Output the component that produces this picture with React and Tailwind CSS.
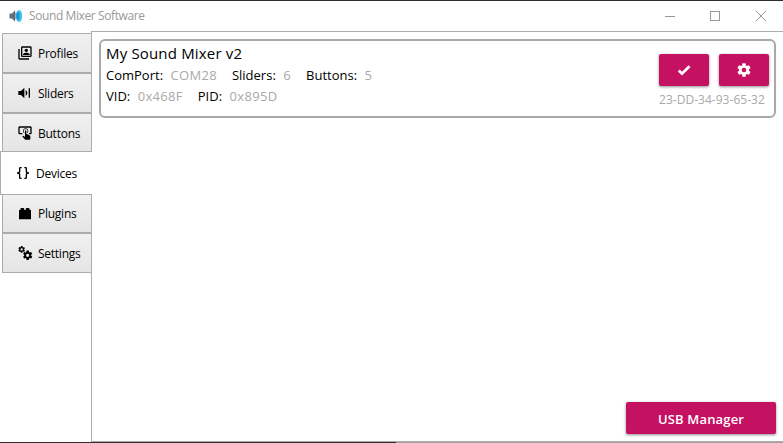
import React from "react";

const COG =
  "M12,15.5A3.5,3.5 0 0,1 8.5,12A3.5,3.5 0 0,1 12,8.5A3.5,3.5 0 0,1 15.5,12A3.5,3.5 0 0,1 12,15.5M19.43,12.97C19.47,12.65 19.5,12.33 19.5,12C19.5,11.67 19.47,11.34 19.43,11L21.54,9.37C21.73,9.22 21.78,8.95 21.66,8.73L19.66,5.27C19.54,5.05 19.27,4.96 19.05,5.05L16.56,6.05C16.04,5.66 15.5,5.32 14.87,5.07L14.5,2.42C14.46,2.18 14.25,2 14,2H10C9.75,2 9.54,2.18 9.5,2.42L9.13,5.07C8.5,5.32 7.96,5.66 7.44,6.05L4.95,5.05C4.73,4.96 4.46,5.05 4.34,5.27L2.34,8.73C2.21,8.95 2.27,9.22 2.46,9.37L4.57,11C4.53,11.34 4.5,11.67 4.5,12C4.5,12.33 4.53,12.65 4.57,12.97L2.46,14.63C2.27,14.78 2.21,15.05 2.34,15.27L4.34,18.73C4.46,18.95 4.73,19.03 4.95,18.95L7.44,17.94C7.96,18.34 8.5,18.68 9.13,18.93L9.5,21.58C9.54,21.82 9.75,22 10,22H14C14.25,22 14.46,21.82 14.5,21.58L14.87,18.93C15.5,18.67 16.04,18.34 16.56,17.94L19.05,18.95C19.27,19.03 19.54,18.95 19.66,18.73L21.66,15.27C21.78,15.05 21.73,14.78 21.54,14.63L19.43,12.97Z";

function Icon({ children, className = "size-4" }) {
  return (
    <svg viewBox="0 0 24 24" fill="currentColor" className={`shrink-0 ${className}`}>
      {children}
    </svg>
  );
}

const ProfilesIcon = (
  <Icon>
    <path fillRule="evenodd" d="M8 2H20A2 2 0 0 1 22 4V16A2 2 0 0 1 20 18H8A2 2 0 0 1 6 16V4A2 2 0 0 1 8 2M8 4V16H20V4ZM2 6H4V20H18V22H4A2 2 0 0 1 2 20Z" />
    <circle cx="14" cy="8" r="2.5" />
    <path d="M9 15V14C9 12.3 12 11.5 14 11.5S19 12.3 19 14V15Z" />
  </Icon>
);

const SlidersIcon = (
  <Icon>
    <path d="M2 9V15H6L11 20V4L6 9ZM13 8V16C14.6 15.3 15.5 13.8 15.5 12S14.6 8.7 13 8ZM17.5 5H19.5V19H17.5Z" />
  </Icon>
);

const ButtonsIcon = (
  <Icon>
    <path d="M13 5C15.21 5 17 6.79 17 9C17 10.5 16.2 11.77 15 12.46V11.24C15.61 10.69 16 9.89 16 9C16 7.34 14.66 6 13 6S10 7.34 10 9C10 9.89 10.39 10.69 11 11.24V12.46C9.8 11.77 9 10.5 9 9C9 6.79 10.79 5 13 5M20 20.5C19.97 21.32 19.32 21.97 18.5 22H13C12.62 22 12.26 21.85 12 21.57L8 17.37L8.74 16.6C8.93 16.39 9.2 16.28 9.5 16.28H9.7L12 18V9C12 8.45 12.45 8 13 8S14 8.45 14 9V13.47L15.21 13.6L19.15 15.79C19.68 16.03 20 16.56 20 17.14V20.5M20 2H4C2.9 2 2 2.9 2 4V12C2 13.11 2.9 14 4 14H8V12H4V4H20V12H18V14H20C21.11 14 22 13.11 22 12V4C22 2.9 21.11 2 20 2Z" />
  </Icon>
);

const DevicesIcon = (
  <Icon>
    <path d="M8,3A2,2 0 0,0 6,5V9A2,2 0 0,1 4,11H3V13H4A2,2 0 0,1 6,15V19A2,2 0 0,0 8,21H10V19H8V14A2,2 0 0,0 6,12A2,2 0 0,0 8,10V5H10V3M16,3A2,2 0 0,1 18,5V9A2,2 0 0,0 20,11H21V13H20A2,2 0 0,0 18,15V19A2,2 0 0,1 16,21H14V19H16V14A2,2 0 0,1 18,12A2,2 0 0,1 16,10V5H14V3H16Z" />
  </Icon>
);

const PluginsIcon = (
  <Icon>
    <path d="M19,6V5A2,2 0 0,0 17,3H15A2,2 0 0,0 13,5V6H11V5A2,2 0 0,0 9,3H7A2,2 0 0,0 5,5V6H3V20H21V6H19Z" />
  </Icon>
);

const SettingsIcon = (
  <Icon>
    <path d={COG} transform="translate(1 0.6) scale(0.5)" />
    <path d={COG} transform="translate(7.6 7) scale(0.7)" />
  </Icon>
);

const TABS = [
  { label: "Profiles", icon: ProfilesIcon, box: "h-10 border-y" },
  { label: "Sliders", icon: SlidersIcon, box: "h-10 border-y" },
  { label: "Buttons", icon: ButtonsIcon, box: "h-[38px] border-t pt-px" },
  { label: "Devices", icon: DevicesIcon, active: true },
  { label: "Plugins", icon: PluginsIcon, box: "h-[38px] border-b" },
  { label: "Settings", icon: SettingsIcon, box: "h-10 border-y" },
];

function Tab({ label, icon, active, box }) {
  if (active) {
    return (
      <div className="-mr-px ml-[-2px] flex h-11 items-center border border-r-0 border-[#acacac] bg-white pl-3.5">
        {icon}
        <span className="ml-[5px] pt-px">{label}</span>
      </div>
    );
  }
  return (
    <div className={`flex items-center border-l border-[#acacac] bg-linear-to-b from-[#f0f0f0] to-[#e5e5e5] pl-3.5 ${box}`}>
      {icon}
      <span className="ml-[5px] pt-px">{label}</span>
    </div>
  );
}

function Field({ name, value }) {
  return (
    <span className="mr-[15px] flex gap-[7.5px]">
      <span className="tracking-[0px]">{name}:</span>
      <span className="tracking-[0.3px] text-[#a9a9a9]">{value}</span>
    </span>
  );
}

function PinkButton({ children, className }) {
  return (
    <button className={`flex h-8 items-center justify-center rounded-[2px] bg-[#c51162] text-white shadow-[0_1px_3px_rgba(0,0,0,0.45)] ${className}`}>
      {children}
    </button>
  );
}

export default function App() {
  return (
    <div className="flex h-[443px] w-[783px] flex-col overflow-hidden border-t border-[#2e2b33] bg-white font-['Open_Sans','Noto_Sans',sans-serif] text-xs tracking-[-0.25px] text-black">
      <header className="flex h-[30px] shrink-0 items-center pl-[9px] text-[#999]">
        <svg viewBox="0 0 14 14" className="size-3.5">
          <path d="M0.5 4.5H3L6 1.3V12.7L3 9.5H0.5Z" fill="#5f6e76" />
          <path d="M6.3 2.5Q8.6 7 6.3 11.5Z" fill="#7d8b92" />
          <ellipse cx="10" cy="7" rx="3.2" ry="6" fill="#45c0f2" />
          <ellipse cx="9" cy="7" rx="1.7" ry="3.9" fill="#1593d4" />
        </svg>
        <span className="ml-1.5 tracking-[-0.4px]">Sound Mixer Software</span>
        <svg viewBox="0 0 120 12" fill="none" stroke="#999" className="mr-px ml-auto h-3 w-[120px]" shapeRendering="crispEdges">
          <path d="M3 6.5H13M48.5 1.5H57.5V10.5H48.5Z" />
          <path d="M94 1L104 11M104 1L94 11" shapeRendering="auto" />
        </svg>
      </header>
      <div className="flex min-h-0 flex-1">
        <nav className="z-10 w-[91px] shrink-0 pt-0.5 pl-0.5">
          {TABS.map((tab) => (
            <Tab key={tab.label} {...tab} />
          ))}
        </nav>
        <main className="flex flex-1 flex-col border-t border-b border-l border-[#acacac] px-[7px] pt-[7px] pb-[7px]">
          <section className="flex h-[79px] justify-between rounded-md border-2 border-[#a9a9a9] pr-[5px] pl-[5px]">
            <div className="pt-px text-[13px]">
              <h1 className="mb-px text-[15px] leading-[22px] tracking-[0.17px]">My Sound Mixer v2</h1>
              <div className="flex leading-[21px]">
                <Field name="ComPort" value="COM28" />
                <Field name="Sliders" value="6" />
                <Field name="Buttons" value="5" />
              </div>
              <div className="flex leading-[21px]">
                <Field name="VID" value="0x468F" />
                <Field name="PID" value="0x895D" />
              </div>
            </div>
            <div className="w-[110px] pt-[13px]">
              <div className="flex gap-2.5">
                <PinkButton className="w-[50px]">
                  <Icon>
                    <path d="M9,20.42L2.79,14.21L5.62,11.38L9,14.77L18.88,4.88L21.71,7.71L9,20.42Z" />
                  </Icon>
                </PinkButton>
                <PinkButton className="w-[50px]">
                  <Icon>
                    <path d={COG} />
                  </Icon>
                </PinkButton>
              </div>
              <p className="mt-1.5 tracking-[0.03px] whitespace-nowrap text-[#a9a9a9]">23-DD-34-93-65-32</p>
            </div>
          </section>
          <PinkButton className="mt-auto w-[150px] self-end pt-[3px] text-[13px] font-semibold tracking-[0.17px]">USB Manager</PinkButton>
        </main>
      </div>
      <footer className="flex h-px shrink-0 bg-[#a0a0a0]">
        <div className="w-[396px] bg-[#2e2b33]" />
      </footer>
    </div>
  );
}
